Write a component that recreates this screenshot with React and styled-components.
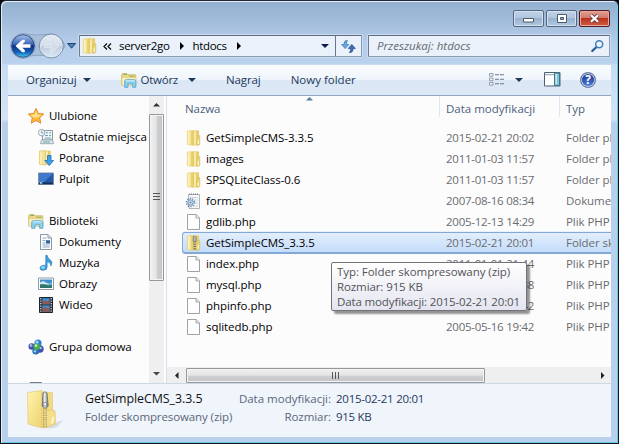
import React from "react";
import styled, { createGlobalStyle, css } from "styled-components";

const Global = createGlobalStyle`
  html, body { margin: 0; padding: 0; background: #05070b; overflow: hidden; }
  * { box-sizing: border-box; }
  svg { display: block; flex: none; overflow: visible; }
`;

const Label = styled.span`
  white-space: pre;
  letter-spacing: ${(p) => p.$track ?? -0.06}px;
`;

const WindowFrame = styled.div`
  width: 619px;
  height: 444px;
  position: relative;
  display: flex;
  flex-direction: column;
  padding: 0 6px 6px;
  overflow: hidden;
  font: 11.5px/21px "Open Sans", "Noto Sans", sans-serif;
  color: #000;
  border: 1px solid #10151d;
  border-top-color: #20283a;
  border-radius: 6px 6px 0 0;
  background: linear-gradient(#94b0d0 0, #a2bcdb 20px, #b5cde9 42px, #b9d1ec 62px, #c8dcf2 64px, #d5e3f5 118px, #b9d0eb 122px, #b9d1ec 100%);
  box-shadow: inset 1px 1px 0 #e4eefa, inset -1px -1px 0 #67cbe9;
`;

const TitleBar = styled.div`
  height: 26px;
  flex: none;
  display: flex;
  justify-content: flex-end;
  align-items: flex-end;
  gap: 2px;
  padding-right: 2px;
`;

const CaptionButton = styled.div`
  width: 31px;
  height: 17px;
  display: grid;
  place-items: center;
  border: 1px solid ${(p) => (p.$close ? "#571c22" : "#536780")};
  border-radius: 2px;
  box-shadow: inset 0 0 0 1px ${(p) => (p.$close ? "#e6a79d" : "#d3e1f0")};
  background: ${(p) =>
    p.$close
      ? "linear-gradient(#e0a093 0, #d2796b 46%, #b9331f 50%, #cf5d43 100%)"
      : "linear-gradient(#c0d1e5 0, #b0c5de 46%, #97b1cf 50%, #b3c9e1 100%)"};
`;

const NavRow = styled.div`
  height: 38px;
  flex: none;
  display: flex;
  align-items: center;
  padding: 0 1px 0 3px;
`;

const Field = styled.div`
  height: 22px;
  display: flex;
  align-items: center;
  border: 1px solid #8a9cb2;
  border-top-color: #5d6b7c;
  border-left-color: #6c7c90;
  border-radius: 1px;
  background: #eaf1fa;
  box-shadow: 0 0 0 1px #cbdcf0;
  line-height: 20px;
`;

const AddressBar = styled(Field)`
  width: 283px;
  margin-left: 2px;
`;
const Crumbs = styled.div`
  flex: 1;
  display: flex;
  align-items: center;
  padding-left: 2px;
`;
const RefreshButton = styled.div`
  width: 26px;
  height: 20px;
  border-left: 1px solid #68788c;
  display: grid;
  place-items: center;
`;
const SearchBox = styled(Field)`
  width: 242px;
  margin-left: 6px;
  padding: 0 5px 0 8px;
  justify-content: space-between;
  color: #66696f;
  font-style: italic;
`;

const Client = styled.div`
  flex: 1;
  min-height: 0;
  display: flex;
  flex-direction: column;
  width: 603px;
  margin-left: 1px;
  overflow: hidden;
`;

const Toolbar = styled.div`
  height: 31px;
  flex: none;
  display: flex;
  align-items: center;
  padding: 0 15px 1px 18px;
  color: #1e395b;
  border-bottom: 1px solid #92a6c2;
  background: linear-gradient(#fafcff 0, #eff5fc 48%, #dce7f5 52%, #dde9f7 100%);
`;
const ToolItem = styled.div`
  display: flex;
  align-items: center;
  margin-left: ${(p) => p.$gap ?? 0}px;
`;
const Spacer = styled.div`
  width: ${(p) => p.$w}px;
  flex: ${(p) => (p.$w ? "none" : 1)};
`;

const Body = styled.div`
  height: 287px;
  flex: none;
  display: flex;
  background: #fcfcfd;
`;

const Sidebar = styled.div`
  width: 159px;
  flex: none;
  display: flex;
  border-right: 1px solid #d3e0f0;
`;
const Tree = styled.div`
  width: 141px;
  padding-top: 9px;
  overflow: hidden;
`;
const TreeRow = styled.div`
  height: 21px;
  display: flex;
  align-items: center;
  gap: 5px;
  padding-left: ${(p) => (p.$child ? 30 : 20)}px;
  white-space: nowrap;
`;

const VScroll = styled.div`
  width: 15px;
  height: 287px;
  display: flex;
  flex-direction: column;
  align-items: center;
  background: #efeff0;
`;
const ScrollArrow = styled.div`
  width: ${(p) => p.$w}px;
  height: ${(p) => p.$h}px;
  flex: none;
  display: grid;
  place-items: center;
`;
const thumb = css`
  display: grid;
  place-items: center;
  flex: none;
  border: 1px solid #96979b;
  border-radius: 1px;
  box-shadow: inset 0 0 0 1px #f4f4f4;
`;
const VThumb = styled.div`
  ${thumb};
  width: 15px;
  height: 167px;
  background: linear-gradient(90deg, #f1f1f1 0, #e4e4e5 48%, #cecfd1 55%, #c3c3c7 100%);
`;
const HScroll = styled.div`
  height: 16px;
  display: flex;
  align-items: center;
  justify-content: space-between;
  background: #efeff0;
`;
const HThumb = styled.div`
  ${thumb};
  width: 299px;
  height: 15px;
  background: linear-gradient(#f1f1f1 0, #e4e4e5 48%, #cecfd1 55%, #c5c5c9 100%);
`;

const FilePane = styled.div`
  flex: 1;
  min-width: 0;
  display: flex;
  flex-direction: column;
  position: relative;
`;
const columns = css`
  display: grid;
  grid-template-columns: 258px 120px 100px;
`;
const Header = styled.div`
  ${columns};
  height: 21px;
  margin-left: 15px;
  color: #4c607a;
  line-height: 25px;
  overflow: visible;
`;
const HeaderCell = styled.div`
  padding-left: ${(p) => (p.$first ? 3 : 6)}px;
  height: 21px;
  border-right: 1px solid #dfe8f2;
`;
const SortMark = styled.div`
  position: absolute;
  left: 139px;
  top: 1px;
`;
const Files = styled.div`
  height: 250px;
  padding: 10px 0 0 15px;
  overflow: hidden;
`;
const FileRow = styled.div`
  ${columns};
  height: 21px;
  width: 480px;
  color: #6b6c70;
  border-radius: 3px;
  ${(p) =>
    p.$selected &&
    css`
      position: relative;
      background: linear-gradient(#e4effc, #c2dcfb);
      box-shadow: inset 0 0 0 1px #82a9d6, 0 1px 0 #82a9d6, 0 -1px 0 #e9f2fc;
    `}
`;
const FileName = styled.div`
  display: flex;
  align-items: center;
  gap: 4px;
  padding-left: 4px;
  color: #000;
`;
const FileCell = styled.div`
  padding-left: 6px;
  white-space: nowrap;
`;

const Tooltip = styled.div`
  position: absolute;
  left: 164px;
  top: 166px;
  width: 196px;
  height: 49px;
  padding: 1px 5px;
  line-height: 15px;
  display: flex;
  flex-direction: column;
  color: #525257;
  border: 1px solid #727278;
  border-radius: 2px;
  background: linear-gradient(#ffffff, #e4e5f0);
  box-shadow: 3px 3px 2px rgba(0, 0, 0, 0.42);
`;

const Details = styled.div`
  flex: 1;
  display: flex;
  padding: 6px 0 0 19px;
  line-height: 18px;
  border-top: 1px solid #ccd8e6;
  background: #f0f4fb;
`;
const DetailsColumn = styled.div`
  display: flex;
  flex-direction: column;
  width: ${(p) => p.$w}px;
  margin-left: ${(p) => p.$gap}px;
  align-items: ${(p) => (p.$end ? "flex-end" : "flex-start")};
  color: ${(p) => p.$color || "#5a6779"};
`;
const DetailsTitle = styled(Label)`
  color: #111;
  font-size: 12.400px;
`;

/* ---------- icons ---------- */

const Caret = ({ dir = "down", size = 7, color = "#1e395b" }) => {
  const d = { down: "M0 0h8L4 4z", up: "M0 4h8L4 0z", right: "M0 0v8l4-4z", left: "M4 0v8L0 4z" }[dir];
  const side = dir === "left" || dir === "right";
  const w = side ? size / 2 : size;
  const h = side ? size : size / 2;
  return (
    <svg width={w} height={h} viewBox={side ? "0 0 4 8" : "0 0 8 4"}>
      <path d={d} fill={color} />
    </svg>
  );
};

const NavButtons = () => (
  <svg width="67" height="30" viewBox="0 0 67 30">
    <defs>
      <linearGradient id="back" x1="0" y1="0" x2="0" y2="1">
        <stop offset="0" stopColor="#a7c3ec" />
        <stop offset=".42" stopColor="#3c66b5" />
        <stop offset=".5" stopColor="#0b2f85" />
        <stop offset=".78" stopColor="#1661bd" />
        <stop offset="1" stopColor="#4bd2f4" />
      </linearGradient>
      <linearGradient id="forward" x1="0" y1="0" x2="0" y2="1">
        <stop offset="0" stopColor="#e3ebf4" />
        <stop offset=".48" stopColor="#d2dde9" />
        <stop offset=".52" stopColor="#bccbdc" />
        <stop offset="1" stopColor="#d9e5f2" />
      </linearGradient>
    </defs>
    <path d="M12 3Q27 5 42 3Q52 5 55 15Q50 25 42 26Q27 22 12 27Z" fill="#a9bfd9" stroke="#8ea6c2" />
    <circle cx="13" cy="15" r="12.4" fill="#c5d8ed" stroke="#7e97b6" strokeWidth=".8" />
    <circle cx="13" cy="15" r="11.3" fill="url(#back)" stroke="#23417b" strokeWidth=".9" />
    <path d="M5.5 15l6.8-6.3h2.5v2.2l-2.5 2.3h8.2v3.6h-8.2l2.5 2.3v2.2h-2.5z" fill="#fff" />
    <circle cx="41.3" cy="15" r="12" fill="#e2ebf5" stroke="#7188a3" strokeWidth=".9" />
    <circle cx="41.3" cy="15" r="10.6" fill="url(#forward)" />
    <path d="M49 15l-6.500-6H40v2.200l2.300 2.200h-8v3.200h8L40 18.800V21h2.500z" fill="#d3deea" stroke="#e6edf5" strokeWidth=".7" />
    <path d="M57.500 12.500h8l-4 4.700z" fill="#4886bd" stroke="#1b4273" strokeLinejoin="round" />
  </svg>
);

const Folder = ({ zip }) => (
  <svg width="16" height="16" viewBox="0 0 16 16">
    <path d="M1.300 1L7.500.4v15.200l-6.200-1z" fill="#f3e190" stroke="#e0c868" strokeWidth=".5" />
    <path d="M2 1.600l1.700-.2v12.800L2 14z" fill="#fbf2c2" />
    <path d="M5.200 1.200L7.300 1v14l-2.100-.4z" fill="#e8cf6c" />
    <path d="M7.600.7h5.100v14.400H7.600z" fill="#e7cd66" stroke="#d9bc52" strokeWidth=".4" />
    <path d="M8 1.200h2v13.500H8z" fill="#f8eba9" />
    <path d="M12.500 5.500l1.300.3v8.700l-3 .8V9z" fill="#ecd67d" stroke="#cfb24f" strokeWidth=".5" />
    <path d="M11.500 10.500l1.500-.7v4l-1.500.5z" fill="#faf0c0" />
    {zip && (
      <>
        <path d="M8.700 2v13" stroke="#66635a" strokeWidth="2.400" strokeDasharray="1 .8" />
        <path d="M7.300 1.700q1.500-1 2.700 0l.3 4.600H7.200z" fill="#b9bdc2" stroke="#5e6368" strokeWidth=".6" />
      </>
    )}
  </svg>
);

const Page = () => (
  <svg width="16" height="16" viewBox="0 0 16 16">
    <path d="M1.500.5h8.700l3.300 3.300v11.700h-12z" fill="#fefefe" stroke="#a0a1a3" />
    <path d="M10 .5v3.500h3.500" fill="#ececec" stroke="#a6a7a9" />
  </svg>
);

const Settings = () => (
  <svg width="16" height="16" viewBox="0 0 16 16">
    <path d="M2.500 1.500h11v14H3z" fill="#f7f8fa" stroke="#b0b5ba" />
    <path d="M3 1.300h10" stroke="#7d858d" strokeWidth="1.600" strokeDasharray="1 1" />
    <path d="M5 4.500h7M8 7h4M9 10h3M8 13h4" stroke="#cdd2d7" />
    <circle cx="4.500" cy="9.500" r="4" fill="none" stroke="#6288ab" strokeWidth="1.500" strokeDasharray="1.300 1.200" />
    <circle cx="4.500" cy="9.500" r="2.700" fill="#d2e3f0" stroke="#6288ab" strokeWidth=".9" />
    <circle cx="4.500" cy="9.500" r="1" fill="#5e84a8" />
  </svg>
);

const Star = () => (
  <svg width="16" height="16" viewBox="0 0 16 16">
    <path d="M8 .4l2.300 5 5.400.6-4 3.700 1.100 5.500L8 12.500l-4.800 2.700 1.100-5.500-4-3.700L5.700 5.400z" fill="#fcb93a" stroke="#e0822c" strokeWidth=".9" strokeLinejoin="round" />
    <path d="M8 2.500l1.300 4L13.500 7l-3.200 2.300-5 .2L2.500 7l4.100-.5z" fill="#ffe385" />
  </svg>
);

const Recent = () => (
  <svg width="16" height="16" viewBox="0 0 16 16">
    <path d="M4.500 1.500h10v9.500h-10z" fill="#edf3f6" stroke="#8b9da7" />
    <path d="M8 3.800h2M11 3.800h2M7 6.500h3M11 6.500h2M7 9h6" stroke="#70a7b3" strokeWidth="1.100" />
    <path d="M3.500 11h11l1 3.700h-13z" fill="#e6ebee" stroke="#899ba6" strokeWidth=".8" />
    <path d="M5 13h7" stroke="#5ba7ae" strokeWidth="1" />
    <circle cx="3.600" cy="3.600" r="3.200" fill="#f5f8fa" stroke="#98a6b1" />
    <path d="M3.600 1.800v2.100h1.800" fill="none" stroke="#61788e" strokeWidth=".8" />
  </svg>
);

const Downloads = () => (
  <svg width="16" height="16" viewBox="0 0 16 16">
    <path d="M1.500 1L7.500.4v14.800l-6-1z" fill="#f4e194" stroke="#d9bd5b" strokeWidth=".6" />
    <path d="M2.200 1.700l1.600-.2v12.400l-1.600-.3z" fill="#fbf1bf" />
    <path d="M7.500.8h5.200v12.700l-5.200 1.500z" fill="#e5ca66" />
    <path d="M8 1.500h2v11.500l-2 1z" fill="#f9ecb0" />
    <path d="M9.500 5.500h3.500v5h2.600L11.200 15.600 6.800 10.500h2.700z" fill="#3ba0e8" stroke="#1d6fb4" strokeWidth=".8" />
  </svg>
);

const Desktop = () => (
  <svg width="16" height="16" viewBox="0 0 16 16">
    <path d="M.5 2h15v11.500H.5z" fill="#2558a7" stroke="#7d8fa7" />
    <path d="M1 2.500h14L6 11H1z" fill="#3e79cd" />
    <path d="M1 11.500h14v1.700H1z" fill="#152f5e" />
    <path d="M1.500 11l3 1.700M4.500 10.500L2 13" stroke="#c4def3" strokeWidth=".8" />
  </svg>
);

const Library = () => (
  <svg width="16" height="16" viewBox="0 0 16 16">
    <path d="M.7 13V2.300l.8-.8h4.300L7 2.800h7.700V13z" fill="#efd988" stroke="#cdb057" strokeWidth=".8" />
    <path d="M2.500 2.500h3.500" stroke="#70b283" strokeWidth="1.100" />
    <path d="M8 4.200h5.500" stroke="#8fb668" strokeWidth="1" />
    <path d="M.8 5.500h14.200v7.700H.8z" fill="#fbf0bd" stroke="#d9c070" strokeWidth=".5" />
    <path d="M3.700 15.300V9.300q0-1.600 1.600-1.600h7.900q1.600 0 1.600 1.600v6h-3.200v-3.500H7v3.500z" fill="#8bd0ee" stroke="#4a9fce" strokeWidth=".8" />
    <path d="M4.800 8.800h9" stroke="#d5f2fb" />
  </svg>
);

const DocumentIcon = () => (
  <svg width="16" height="16" viewBox="0 0 16 16">
    <path d="M2.500.5H10l3.500 3.500v11.500h-11z" fill="#fafcfe" stroke="#8998a7" />
    <path d="M10 .5V4h3.500" fill="#dce5ee" stroke="#8998a7" />
    <path d="M4.500 4h4M4.500 6.500h3M4.500 9h3M4.500 11h7M4.500 13h7" stroke="#8eabc8" />
    <path d="M8 6.300h4v3.200H8z" fill="#305d9c" />
  </svg>
);

const Music = () => (
  <svg width="16" height="16" viewBox="0 0 16 16">
    <path d="M7.800.3h1.300q.5 2.800 3 4.400 3.200 2.400.8 6.300.2-3.300-3.800-4.200v5.500q0 2.900-3.900 3-3.200 0-3.200-2.400 0-2.800 5.800-2.700z" fill="#3aa0e2" stroke="#2172ba" strokeWidth=".6" />
    <ellipse cx="5" cy="12.500" rx="2" ry="1.200" fill="#94d5f6" />
  </svg>
);

const Picture = () => (
  <svg width="16" height="16" viewBox="0 0 16 16">
    <path d="M.5 2h15v11.500H.5z" fill="#fff" stroke="#8e9ba6" />
    <path d="M2 3.500h12v4H2z" fill="#3f8fcf" />
    <path d="M2 7.500h12V12H2z" fill="#5aa8c4" />
    <path d="M2 6.500l3-1.500 4 2 2 1.500H2z" fill="#cfe8ef" />
    <path d="M2 8.500q4-1 8 1l4-.5v3H2z" fill="#2f7468" />
  </svg>
);

const Video = () => (
  <svg width="16" height="16" viewBox="0 0 16 16">
    <path d="M1.500.5h13v15h-13z" fill="#2a3340" stroke="#1c242f" />
    <path d="M2.800 1v14M13.200 1v14" stroke="#e2e7ec" strokeWidth="1.200" strokeDasharray="1.300 1.200" />
    <path d="M4.500 1.300h7v6h-7zM4.500 8.500h7v6.200h-7z" fill="#3e93d6" />
    <path d="M4.500 5l2.500-2 2 1.500 2.500-2v4.800h-7zM4.500 12l3-2.500 2 2 2-1v4.200h-7z" fill="#8f5950" />
  </svg>
);

const HomeGroup = () => (
  <svg width="16" height="16" viewBox="0 0 16 16">
    <circle cx="10" cy="4" r="3.600" fill="#347fd0" />
    <circle cx="3.700" cy="7.500" r="3.200" fill="#4452ae" />
    <circle cx="12" cy="10" r="3.700" fill="#4050ad" />
    <circle cx="7.800" cy="12" r="3.500" fill="#2e70b7" />
    <circle cx="8.700" cy="7.800" r="3.300" fill="#43ac48" />
    <circle cx="9" cy="3" r="1.500" fill="#a6d7f5" />
    <circle cx="3" cy="6.500" r="1.400" fill="#a5aeea" />
    <circle cx="8" cy="6.700" r="1.400" fill="#b8ecac" />
    <circle cx="12.700" cy="9" r="1.200" fill="#a5bcec" />
    <circle cx="7" cy="12.300" r="1.200" fill="#94cdec" />
  </svg>
);

const Computer = () => (
  <svg width="16" height="16" viewBox="0 0 16 16">
    <path d="M2 1.500h11.500v10H2z" fill="#5b8db2" stroke="#747d85" />
  </svg>
);

const BigZip = () => (
  <svg width="38" height="39" viewBox="0 0 38 39">
    <defs>
      <linearGradient id="zipFront" x1="0" y1="0" x2="1" y2="1">
        <stop offset="0" stopColor="#fff4ae" />
        <stop offset="1" stopColor="#edd270" />
      </linearGradient>
      <linearGradient id="pull" x1="0" y1="0" x2="1" y2="0">
        <stop offset="0" stopColor="#6e747a" />
        <stop offset=".4" stopColor="#f0f2f4" />
        <stop offset="1" stopColor="#696f76" />
      </linearGradient>
    </defs>
    <path d="M19 36L36 30l-6 7q-5 2-11 1z" fill="#c9ccd0" opacity=".6" />
    <path d="M.5 2.500L15 .5V38L1 34z" fill="url(#zipFront)" stroke="#dfc66c" strokeWidth=".6" />
    <path d="M15 2l10.500.5v31.500L15 38z" fill="#f2db80" stroke="#dbc063" strokeWidth=".5" />
    <path d="M25.500 20q3 .2 2.700 3v11L17 38V20z" fill="#f5df86" stroke="#d8bc5e" strokeWidth=".6" />
    <path d="M24 34q3-1 3-4v-4q-3 2-3 8z" fill="#fff6ca" />
    <path d="M18 16v21" stroke="#a89257" strokeWidth="3.600" strokeDasharray="1.200 1" />
    <path d="M18 3v34" stroke="#ece1b3" strokeWidth="1" />
    <path d="M16 3q2-2.500 4 0l1.200 13q-2.900 4.500-6 0z" fill="url(#pull)" stroke="#5d636a" strokeWidth=".7" />
    <path d="M16.800 12.500h2.700v3.500h-2.700z" fill="#fff" stroke="#666" strokeWidth=".6" />
  </svg>
);

const Refresh = () => (
  <svg width="15" height="13" viewBox="0 0 15 13">
    <path d="M6.500.3Q3 .5 3 3.500V4.500H.6L4.200 8.600 7.800 4.500H5.500Q5.300 2 6.500.3z" fill="#66a9dc" stroke="#3b76ae" strokeWidth=".7" />
    <path d="M8.500 12.700q3.500-.2 3.500-3.200V8.500h2.400L10.800 4.400 7.200 8.500h2.300Q9.700 11 8.500 12.700z" fill="#3d6fb0" stroke="#264f8e" strokeWidth=".7" />
  </svg>
);

const Magnifier = () => (
  <svg width="13" height="12" viewBox="0 0 13 12">
    <path d="M5.300 7.200L1.300 10.900" stroke="#2d5c9e" strokeWidth="2.200" strokeLinecap="round" />
    <circle cx="8.200" cy="4.300" r="3.500" fill="#eaf5fd" stroke="#3f7fc0" strokeWidth="1.500" />
  </svg>
);

const ViewIcon = () => (
  <svg width="16" height="13" viewBox="0 0 16 13">
    {[0.5, 5, 9.500].map((y) => (
      <g key={y}>
        <path d={`M.5 ${y}h3.500v2.700H.5z`} fill="#f1f5fa" stroke="#7f8c9c" strokeWidth=".8" />
        <path d={`M6 ${y + 1.300}h4M11 ${y + 1.300}h4`} stroke="#69788b" strokeWidth="1.100" />
      </g>
    ))}
  </svg>
);

const PreviewIcon = () => (
  <svg width="17" height="15" viewBox="0 0 17 15">
    <path d="M.5.5h15.500v13.500H.5z" fill="#fff" stroke="#4c6076" />
    <path d="M1 2.700h9" stroke="#8d9cab" />
    <path d="M10.500 1h5v12.500h-5z" fill="#7cc4d6" stroke="#44758a" />
    <path d="M11.500 2h1.500v10h-1.500z" fill="#c5eaf0" />
  </svg>
);

const HelpBadge = styled.div`
  width: 16px;
  height: 16px;
  border-radius: 50%;
  border: 1px solid #647695;
  box-shadow: inset 0 0 0 1px #cad6ef;
  background: radial-gradient(circle at 50% 85%, #5182df, #203f9e 65%);
  color: #fff;
  font: bold 12px/14px "Open Sans", sans-serif;
  text-align: center;
`;

/* ---------- data ---------- */

const tree = [
  { icon: Star, text: "Ulubione" },
  { icon: Recent, text: "Ostatnie miejsca", child: true },
  { icon: Downloads, text: "Pobrane", child: true },
  { icon: Desktop, text: "Pulpit", child: true },
  null,
  { icon: Library, text: "Biblioteki" },
  { icon: DocumentIcon, text: "Dokumenty", child: true },
  { icon: Music, text: "Muzyka", child: true },
  { icon: Picture, text: "Obrazy", child: true },
  { icon: Video, text: "Wideo", child: true },
  null,
  { icon: HomeGroup, text: "Grupa domowa" },
  null,
  { icon: Computer, text: "" },
];

const files = [
  { icon: Folder, name: "GetSimpleCMS-3.3.5", date: "2015-02-21 20:02", type: "Folder plików" },
  { icon: Folder, name: "images", date: "2011-01-03 11:57", type: "Folder plików" },
  { icon: Folder, name: "SPSQLiteClass-0.6", date: "2011-01-03 11:57", type: "Folder plików" },
  { icon: Settings, name: "format", date: "2007-08-16 08:34", type: "Dokument" },
  { icon: Page, name: "gdlib.php", date: "2005-12-13 14:29", type: "Plik PHP" },
  { icon: Folder, name: "GetSimpleCMS_3.3.5", date: "2015-02-21 20:01", type: "Folder skompresowany", zip: true },
  { icon: Page, name: "index.php", date: "2011-01-01 21:44", type: "Plik PHP" },
  { icon: Page, name: "mysql.php", date: "2005-05-16 19:38", type: "Plik PHP" },
  { icon: Page, name: "phpinfo.php", date: "2005-05-16 19:42", type: "Plik PHP" },
  { icon: Page, name: "sqlitedb.php", date: "2005-05-16 19:42", type: "Plik PHP" },
];

export default function App() {
  return (
    <>
      <Global />
      <WindowFrame>
        <TitleBar>
          <CaptionButton>
            <svg width="11" height="9" viewBox="0 0 11 9">
              <path d="M.5 4.500h10v3.500H.5z" fill="#fff" stroke="#4c5a6c" />
            </svg>
          </CaptionButton>
          <CaptionButton>
            <svg width="10" height="9" viewBox="0 0 10 9">
              <path d="M.5.5h9v8h-9z" fill="#fff" stroke="#4c5a6c" />
              <path d="M3.500 3.500h3v2h-3z" fill="#97abc3" stroke="#4c5a6c" />
            </svg>
          </CaptionButton>
          <CaptionButton $close>
            <svg width="11" height="9" viewBox="0 0 11 9">
              <path d="M2 1.200l7 6.600M9 1.200L2 7.800" stroke="#694146" strokeWidth="3.800" />
              <path d="M2 1.200l7 6.600M9 1.200L2 7.800" stroke="#fff" strokeWidth="2.200" />
            </svg>
          </CaptionButton>
        </TitleBar>

        <NavRow>
          <NavButtons />
          <AddressBar>
            <Crumbs>
              <Folder />
              <Spacer $w={5} />
              <svg width="9" height="7" viewBox="0 0 9 7">
                <path d="M4 .5l-3 3 3 3M8 .5l-3 3 3 3" fill="none" stroke="#111" strokeWidth="1.300" />
              </svg>
              <Spacer $w={7} />
              <Label $track={-0.3}>server2go</Label>
              <Spacer $w={10} />
              <Caret dir="right" size={8} color="#000" />
              <Spacer $w={9} />
              <Label $track={-0.35}>htdocs</Label>
              <Spacer $w={10} />
              <Caret dir="right" size={8} color="#000" />
              <Spacer />
              <Caret size={8} color="#0b1e4b" />
              <Spacer $w={6} />
            </Crumbs>
            <RefreshButton>
              <Refresh />
            </RefreshButton>
          </AddressBar>
          <SearchBox>
            <Label $track={0.02}>Przeszukaj: htdocs</Label>
            <Magnifier />
          </SearchBox>
        </NavRow>

        <Client>
          <Toolbar>
            <ToolItem>
              <Label $track={-0.12}>Organizuj</Label>
              <Spacer $w={6} />
              <Caret size={8} />
            </ToolItem>
            <ToolItem $gap={30}>
              <Library />
              <Spacer $w={4} />
              <Label $track={-0.25}>Otwórz</Label>
              <Spacer $w={10} />
              <Caret size={8} />
            </ToolItem>
            <ToolItem $gap={30}>
              <Label $track={-0.1}>Nagraj</Label>
            </ToolItem>
            <ToolItem $gap={30}>
              <Label $track={0}>Nowy folder</Label>
            </ToolItem>
            <Spacer />
            <ViewIcon />
            <Spacer $w={10} />
            <Caret size={8} />
            <Spacer $w={21} />
            <PreviewIcon />
            <Spacer $w={19} />
            <HelpBadge>?</HelpBadge>
          </Toolbar>

          <Body>
            <Sidebar>
              <Tree>
                {tree.map((node, i) => {
                  if (!node) return <TreeRow key={i} />;
                  const Icon = node.icon;
                  return (
                    <TreeRow key={i} $child={node.child}>
                      <Icon />
                      <Label>{node.text}</Label>
                    </TreeRow>
                  );
                })}
              </Tree>
              <VScroll>
                <ScrollArrow $w={15} $h={18}>
                  <Caret dir="up" size={7} color="#333" />
                </ScrollArrow>
                <VThumb>
                  <svg width="7" height="9" viewBox="0 0 7 9">
                    <path d="M0 .5h7M0 3.500h7M0 6.500h7" stroke="#55575b" />
                  </svg>
                </VThumb>
                <Spacer />
                <ScrollArrow $w={15} $h={18}>
                  <Caret size={7} color="#444" />
                </ScrollArrow>
              </VScroll>
            </Sidebar>

            <FilePane>
              <Header>
                <HeaderCell $first>
                  <Label>Nazwa</Label>
                </HeaderCell>
                <HeaderCell>
                  <Label $track={0}>Data modyfikacji</Label>
                </HeaderCell>
                <HeaderCell>
                  <Label>Typ</Label>
                </HeaderCell>
              </Header>
              <SortMark>
                <Caret dir="up" size={7} color="#4f7f9a" />
              </SortMark>
              <Files>
                {files.map(({ icon: Icon, ...f }) => (
                  <FileRow key={f.name} $selected={f.zip}>
                    <FileName>
                      <Icon zip={f.zip} />
                      <Label>{f.name}</Label>
                    </FileName>
                    <FileCell>
                      <Label $track={-0.26}>{f.date}</Label>
                    </FileCell>
                    <FileCell>
                      <Label>{f.type}</Label>
                    </FileCell>
                  </FileRow>
                ))}
              </Files>
              <HScroll>
                <ScrollArrow $w={19} $h={15}>
                  <Caret dir="left" size={7} color="#222" />
                </ScrollArrow>
                <HThumb>
                  <svg width="9" height="7" viewBox="0 0 9 7">
                    <path d="M1.500 0v7M4.500 0v7M7.500 0v7" stroke="#55575b" />
                  </svg>
                </HThumb>
                <Spacer />
                <ScrollArrow $w={17} $h={15}>
                  <Caret dir="right" size={7} color="#222" />
                </ScrollArrow>
              </HScroll>
              <Tooltip>
                <Label>Typ: Folder skompresowany (zip)</Label>
                <Label $track={-0.1}>Rozmiar: 915 KB</Label>
                <Label $track={-0.13}>Data modyfikacji: 2015-02-21 20:01</Label>
              </Tooltip>
            </FilePane>
          </Body>

          <Details>
            <BigZip />
            <DetailsColumn $w={147} $gap={20}>
              <DetailsTitle $track={-0.05}>GetSimpleCMS_3.3.5</DetailsTitle>
              <Label $track={-0.1}>Folder skompresowany (zip)</Label>
            </DetailsColumn>
            <DetailsColumn $w={99} $gap={0} $end>
              <Label $track={0}>Data modyfikacji:</Label>
              <Label>Rozmiar:</Label>
            </DetailsColumn>
            <DetailsColumn $w={100} $gap={5} $color="#1e395b">
              <Label $track={-0.26}>2015-02-21 20:01</Label>
              <Label $track={-0.3}>915 KB</Label>
            </DetailsColumn>
          </Details>
        </Client>
      </WindowFrame>
    </>
  );
}
